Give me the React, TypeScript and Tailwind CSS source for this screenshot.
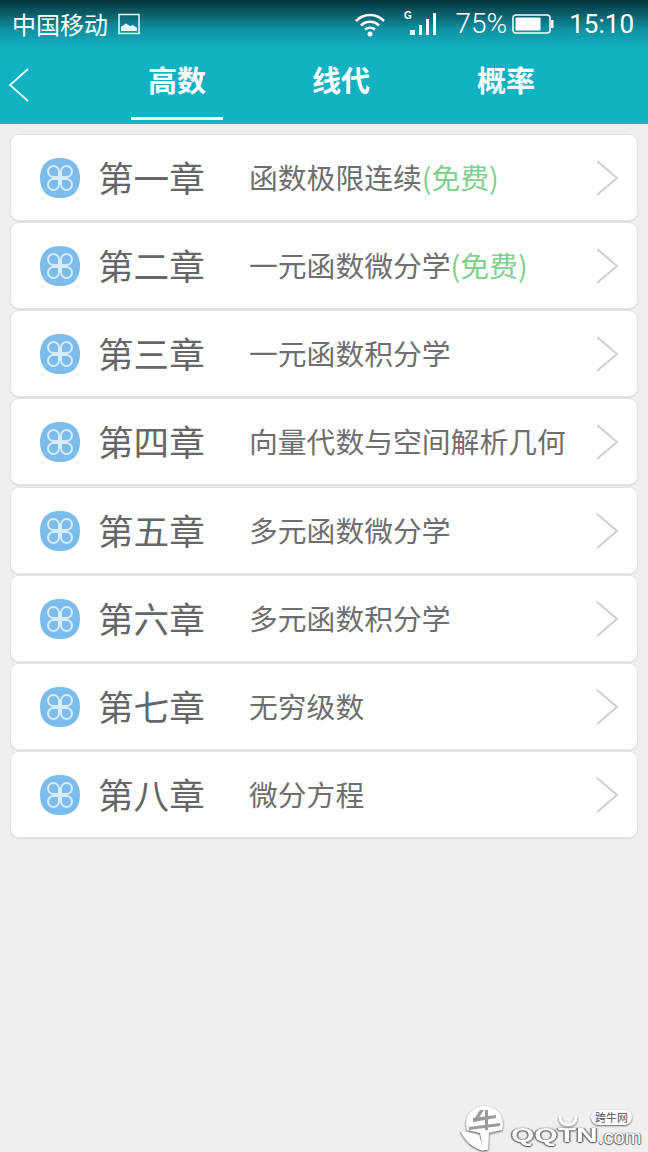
const chapters = [
  { name: "第一章", title: "函数极限连续", free: true },
  { name: "第二章", title: "一元函数微分学", free: true },
  { name: "第三章", title: "一元函数积分学", free: false },
  { name: "第四章", title: "向量代数与空间解析几何", free: false },
  { name: "第五章", title: "多元函数微分学", free: false },
  { name: "第六章", title: "多元函数积分学", free: false },
  { name: "第七章", title: "无穷级数", free: false },
  { name: "第八章", title: "微分方程", free: false },
];

function CloverIcon() {
  return (
    <svg width="40" height="40" viewBox="0 0 40 40" className="shrink-0">
      <path
        d="M20 0C33 0 40 7 40 20C40 33 33 40 20 40C7 40 0 33 0 20C0 7 7 0 20 0Z"
        fill="#7bbcec"
      />
      <g fill="none" stroke="#d8ecfa" strokeWidth="2">
        <path d="M19 19H13.500A5.500 5.500 0 1 1 19 13.500Z" />
        <path d="M21 19H26.500A5.500 5.500 0 1 0 21 13.500Z" />
        <path d="M19 21H13.500A5.500 5.500 0 1 0 19 26.500Z" />
        <path d="M21 21H26.500A5.500 5.500 0 1 1 21 26.500Z" />
      </g>
    </svg>
  );
}

function StatusBar() {
  return (
    <div className="flex h-[48px] items-center justify-between bg-gradient-to-b from-[#06353c] via-[#0f8f9f] via-60% to-[#12b2c3] pl-[12px] pr-[14px] text-white">
      <div className="flex items-center gap-[10px]">
        <span className="text-[24px] leading-none">中国移动</span>
        <svg width="22" height="22" viewBox="0 0 22 22">
          <rect x="1" y="1.500" width="20" height="19" fill="none" stroke="#e6fbfd" strokeWidth="1.500" />
          <path d="M3 18V14L8 10.500L12 13L15 12L19 15V18Z" fill="#e6fbfd" />
        </svg>
      </div>
      <div className="flex items-center">
        <svg width="32" height="26" viewBox="0 0 32 26" className="mr-[18px]">
          <g fill="none" stroke="#ffffff" strokeWidth="2.500">
            <path d="M2 10C10 2 22 2 30 10" />
            <path d="M7 14.500C12 9.500 20 9.500 25 14.500" />
            <path d="M11 18.500C14 16 18 16 21 18.500" />
          </g>
          <circle cx="16" cy="23" r="2.500" fill="#ffffff" />
        </svg>
        <svg width="33" height="28" viewBox="0 0 33 28" className="mr-[18px]">
          <text x="0" y="9" fontSize="10" fontWeight="700" fill="#ffffff" fontFamily="'Liberation Sans', sans-serif">
            G
          </text>
          <rect x="6" y="20" width="5" height="5" fill="#ffffff" />
          <rect x="15" y="15" width="3" height="10" fill="#ffffff" />
          <rect x="22" y="9" width="3" height="16" fill="#ffffff" />
          <rect x="29" y="3" width="3" height="22" fill="#ffffff" />
        </svg>
        <span className="text-[28px] leading-none font-['Roboto',sans-serif] font-light">75%</span>
        <svg width="42" height="22" viewBox="0 0 42 22" className="ml-[5px]">
          <rect x="1" y="2" width="37" height="18" rx="3" fill="none" stroke="#ffffff" strokeWidth="1.500" />
          <rect x="3.500" y="4.500" width="25" height="13" rx="1" fill="#ffffff" />
          <rect x="39" y="7" width="2.500" height="8" fill="#ffffff" />
        </svg>
        <span className="ml-[15px] text-[26px] leading-none font-['Roboto',sans-serif]">15:10</span>
      </div>
    </div>
  );
}

function NavBar() {
  return (
    <div className="relative flex h-[76px] bg-[#12b2c3] text-white">
      <div className="flex w-[131px] items-center pb-[2px] pl-[8px]">
        <svg width="22" height="36" viewBox="0 0 22 36">
          <path d="M20 2L2 18L20 34" fill="none" stroke="#e8fafc" strokeWidth="1.800" />
        </svg>
      </div>
      <div className="flex flex-col items-center">
        <div className="flex h-[69px] w-[92px] items-center justify-center pb-[6px] text-[29px] font-bold">高数</div>
        <div className="h-[3px] w-[92px] bg-white" />
      </div>
      <div className="ml-[72px] flex h-[69px] w-[92px] items-center justify-center pb-[6px] text-[29px] font-bold">线代</div>
      <div className="ml-[73px] flex h-[69px] w-[92px] items-center justify-center pb-[6px] text-[29px] font-bold">概率</div>
    </div>
  );
}

function ChapterRow({ name, title, free }: { name: string; title: string; free: boolean }) {
  return (
    <div className="flex h-[87px] items-center rounded-[9px] border border-[#e2e2e2] bg-white pl-[29px] pr-[18px] shadow-[0_1px_1px_#dddddd] [&:nth-child(5)]:mt-[1px]">
      <CloverIcon />
      <span className="ml-[18px] mb-[2px] w-[151px] shrink-0 text-[35.6px] leading-none text-[#666666]">{name}</span>
      <span className="flex-1 text-[28.8px] leading-none whitespace-nowrap text-[#6e6e6e]">
        {title}
        {free && <span className="text-[#7fd08d]">(免费)</span>}
      </span>
      <svg width="24" height="38" viewBox="0 0 24 38" className="shrink-0">
        <path d="M2 2L22 19L2 36" fill="none" stroke="#cfcfcf" strokeWidth="2" />
      </svg>
    </div>
  );
}

// 角落水印
function Watermark() {
  return (
    <div className="absolute bottom-0 right-0 h-[50px] w-[190px] text-white [text-shadow:0_1px_1px_#555555,1px_0_1px_#777777,-1px_0_1px_#777777] font-['Liberation_Sans',sans-serif]">
      <svg
        width="48"
        height="48"
        viewBox="0 0 48 48"
        className="absolute left-[2px] top-[2px]"
        style={{ filter: "drop-shadow(0 1px 1px #555555)" }}
      >
        <path d="M7 26C3 12 13 2 24 2C36 2 46 12 42 26L29 29L28 46L23 46L20 29Z" fill="#ffffff" />
        <path d="M0 26L19 31L24 47C12 44 4 36 0 26Z" fill="#ffffff" />
        <path d="M25 6H28V26H25ZM13 14L36 11V14L13 18ZM9 23L40 19V22L9 26Z" fill="#9a9a9a" />
        <path d="M20 6L24 6L16 18L13 17Z" fill="#9a9a9a" />
      </svg>
      <span className="absolute left-[53px] top-[23px] origin-left scale-x-[1.5] text-[20px] leading-[20px] font-bold">QQTN</span>
      <span className="absolute left-[140px] top-[25px] text-[20px] leading-[20px]">.com</span>
      <svg width="20" height="12" viewBox="0 0 20 12" className="absolute left-[100px] top-[13px]" style={{ filter: "drop-shadow(0 1px 1px #666666)" }}>
        <path d="M2 1C2 8 6 10 10 10C14 10 18 8 18 1" fill="none" stroke="#ffffff" strokeWidth="3" />
      </svg>
      <span className="absolute left-[133px] top-[8px] rounded-full bg-white px-[4px] text-[11px] leading-[15px] text-[#555555] shadow-[0_1px_2px_#666666] [text-shadow:none] font-['Noto_Sans_CJK_SC',sans-serif]">
        跨牛网
      </span>
    </div>
  );
}

export default function App() {
  return (
    <div className="relative h-[1152px] w-[648px] overflow-hidden bg-[#efefef] font-['Noto_Sans_CJK_SC','Liberation_Sans',sans-serif]">
      <StatusBar />
      <NavBar />
      <div className="flex flex-col gap-px px-[10px] pt-[10px]">
        {chapters.map((c) => (
          <ChapterRow key={c.name} name={c.name} title={c.title} free={c.free} />
        ))}
      </div>
      <Watermark />
    </div>
  );
}
